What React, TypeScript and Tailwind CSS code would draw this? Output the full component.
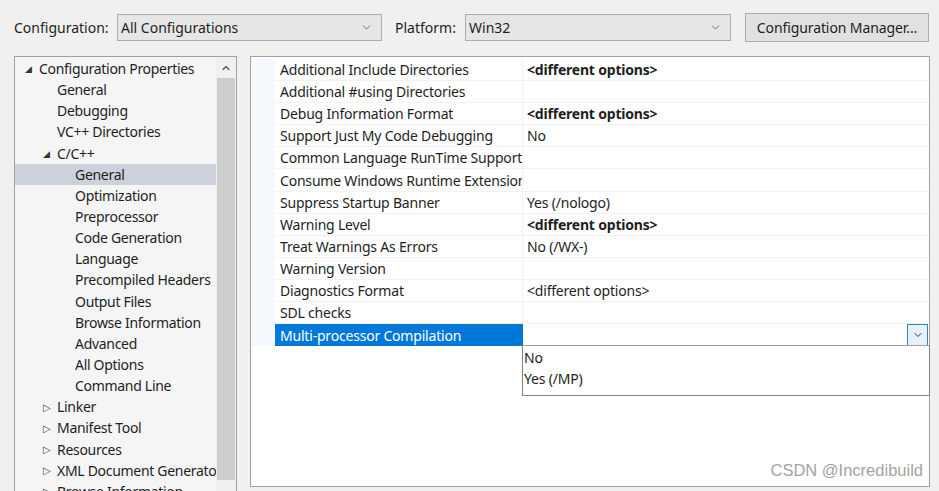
import { ChevronDown, ChevronUp } from 'lucide-react';

interface TreeItem {
    label: string;
    level: 0 | 1 | 2;
    arrow?: 'open' | 'closed';
    selected?: boolean;
}

const treeItems: TreeItem[] = [
    { label: 'Configuration Properties', level: 0, arrow: 'open' },
    { label: 'General', level: 1 },
    { label: 'Debugging', level: 1 },
    { label: 'VC++ Directories', level: 1 },
    { label: 'C/C++', level: 1, arrow: 'open' },
    { label: 'General', level: 2, selected: true },
    { label: 'Optimization', level: 2 },
    { label: 'Preprocessor', level: 2 },
    { label: 'Code Generation', level: 2 },
    { label: 'Language', level: 2 },
    { label: 'Precompiled Headers', level: 2 },
    { label: 'Output Files', level: 2 },
    { label: 'Browse Information', level: 2 },
    { label: 'Advanced', level: 2 },
    { label: 'All Options', level: 2 },
    { label: 'Command Line', level: 2 },
    { label: 'Linker', level: 1, arrow: 'closed' },
    { label: 'Manifest Tool', level: 1, arrow: 'closed' },
    { label: 'Resources', level: 1, arrow: 'closed' },
    { label: 'XML Document Generator', level: 1, arrow: 'closed' },
    { label: 'Browse Information', level: 1, arrow: 'closed' },
];

const props: { name: string; value: string; bold?: boolean }[] = [
    { name: 'Additional Include Directories', value: '<different options>', bold: true },
    { name: 'Additional #using Directories', value: '' },
    { name: 'Debug Information Format', value: '<different options>', bold: true },
    { name: 'Support Just My Code Debugging', value: 'No' },
    { name: 'Common Language RunTime Support', value: '' },
    { name: 'Consume Windows Runtime Extension', value: '' },
    { name: 'Suppress Startup Banner', value: 'Yes (/nologo)' },
    { name: 'Warning Level', value: '<different options>', bold: true },
    { name: 'Treat Warnings As Errors', value: 'No (/WX-)' },
    { name: 'Warning Version', value: '' },
    { name: 'Diagnostics Format', value: '<different options>' },
    { name: 'SDL checks', value: '' },
];

const font = { fontFamily: '"Noto Sans", "Open Sans", sans-serif' };

function Combo({ value, width }: { value: string; width: string }) {
    return (
        <div className={`${width} h-[27px] flex items-center justify-between bg-[#e6e6e6] border border-[#adadad] pl-[3px] pr-[8px] text-[14px] text-[#1e1e1e]`}>
            <span>{value}</span>
            <ChevronDown className="w-[13px] h-[13px] text-[#555]" strokeWidth={1.5} />
        </div>
    );
}

function TreeRow({ item }: { item: TreeItem }) {
    const indent = item.level === 0 ? 'pl-[10px]' : item.level === 1 ? 'pl-[28px]' : 'pl-[60px]';
    return (
        <div className={`h-[21.15px] flex items-center ${indent} ${item.selected ? 'bg-[#cdd1dc]' : ''} whitespace-nowrap overflow-hidden`}>
            {item.arrow === 'open' && <span className="w-[14px] shrink-0 text-[9px] text-[#333] leading-none">◢</span>}
            {item.arrow === 'closed' && <span className="w-[14px] shrink-0 text-[10px] text-[#444] leading-none">▷</span>}
            {item.level === 1 && !item.arrow && <span className="w-[14px] shrink-0" />}
            <span>{item.label}</span>
        </div>
    );
}

export default function App() {
    return (
        <div className="w-[939px] h-[491px] overflow-hidden bg-[#f0f0f0] text-[#1e1e1e] text-[14px]" style={font}>
            {/* Top bar */}
            <div className="flex items-center h-[53px] pl-[14px] pt-[1px]">
                <span className="w-[103px]">Configuration:</span>
                <Combo value="All Configurations" width="w-[265px]" />
                <span className="ml-[13px] w-[70px]">Platform:</span>
                <Combo value="Win32" width="w-[266px]" />
                <button className="ml-[14px] w-[184px] h-[29px] bg-[#e1e1e1] border border-[#adadad] text-[14px] text-[#1e1e1e] tracking-[-0.1px]">
                    Configuration Manager...
                </button>
            </div>

            <div className="flex mt-[3px] pl-[14px]">
                {/* Tree */}
                <div className="w-[223px] h-[440px] border border-[#a0a0a0] bg-[#f5f5f5] flex tracking-[-0.3px]">
                    <div className="flex-1 min-w-0 pt-[1px] overflow-hidden">
                        {treeItems.map((item, i) => (
                            <TreeRow key={i} item={item} />
                        ))}
                    </div>
                    <div className="w-[20px] shrink-0 flex flex-col bg-[#f0f0f0]">
                        <div className="h-[21px] flex items-center justify-center">
                            <ChevronUp className="w-[12px] h-[12px] text-[#555]" strokeWidth={2.5} />
                        </div>
                        <div className="mx-[1px] h-[402px] bg-[#cdcdcd]" />
                    </div>
                </div>

                {/* Property grid */}
                <div className="ml-[13px] w-[680px] h-[431px] border border-[#a0a0a0] bg-white relative tracking-[-0.2px]">
                    <div className="flex pt-[2px]">
                        <div className="w-[24px] bg-[#f5f8fd]" />
                        <div className="flex-1">
                            {props.map((p, i) => (
                                <div key={i} className="h-[22.1px] flex border-b border-[#f2f2f5]">
                                    <div className="w-[248px] pl-[5px] flex items-center border-r border-[#f2f2f5] whitespace-nowrap overflow-hidden">
                                        {p.name}
                                    </div>
                                    <div className={`flex-1 pl-[4px] flex items-center ${p.bold ? 'font-bold' : ''}`}>
                                        {p.value}
                                    </div>
                                </div>
                            ))}
                            <div className="h-[22.1px] flex">
                                <div className="w-[248px] pl-[5px] flex items-center bg-[#0078d7] text-white whitespace-nowrap">
                                    Multi-processor Compilation
                                </div>
                                <div className="flex-1 flex justify-end pr-[1px]">
                                    <div className="w-[21px] h-[22px] bg-[#e5f1fb] border border-[#3c7fb1] flex items-center justify-center">
                                        <ChevronDown className="w-[12px] h-[12px] text-[#333]" strokeWidth={2} />
                                    </div>
                                </div>
                            </div>
                        </div>
                    </div>

                    {/* Dropdown list */}
                    <div className="absolute left-[271px] top-[288px] w-[408px] h-[51px] bg-white border border-[#828282] border-t-[#a0a0a0] pt-[1px] pl-[1px]">
                        <div className="h-[21px] flex items-center">No</div>
                        <div className="h-[21px] flex items-center">Yes (/MP)</div>
                    </div>

                    {/* Watermark */}
                    <div
                        className="absolute right-[6px] bottom-[3px] text-[16.5px] text-[#a3a3a3] tracking-normal"
                        style={{ fontFamily: '"Liberation Sans", Arial, sans-serif' }}
                    >
                        CSDN @Incredibuild
                    </div>
                </div>
            </div>
        </div>
    );
}
